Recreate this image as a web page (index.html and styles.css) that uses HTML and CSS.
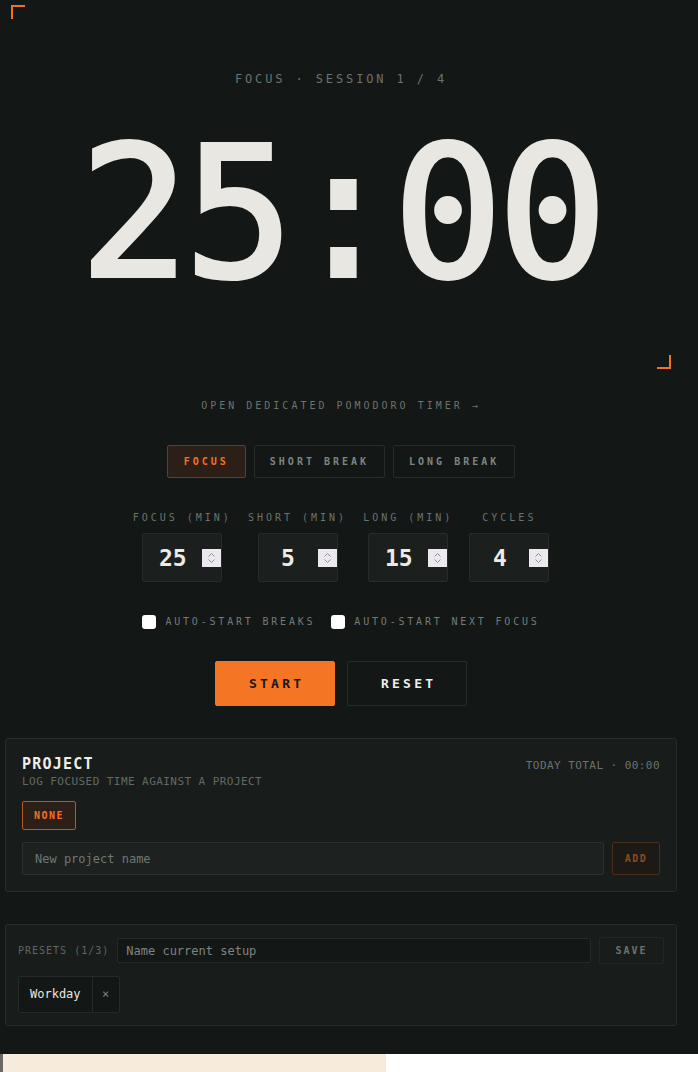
FILE: index.html
```html
<!DOCTYPE html>
<html lang="en">
<head>
<meta charset="utf-8">
<title>Pomodoro</title>
<link rel="stylesheet" href="styles.css">
</head>
<body>
<main class="app">
  <section class="clock">
    <span class="corner corner-tl"></span>
    <span class="corner corner-br"></span>
    <div class="clock-phase">FOCUS · SESSION 1 / 4</div>
    <div class="clock-time">25:00</div>
  </section>

  <a class="dedicated-link" href="#">OPEN DEDICATED POMODORO TIMER →</a>

  <div class="modes">
    <button class="mode mode-active">FOCUS</button>
    <button class="mode">SHORT BREAK</button>
    <button class="mode">LONG BREAK</button>
  </div>

  <div class="fields">
    <label class="field">
      <span class="field-label">FOCUS (MIN)</span>
      <span class="stepper"><span class="stepper-value">25</span><span class="spin"><svg width="19" height="18" viewBox="0 0 19 18"><rect width="19" height="18" fill="#ebe9ef"/><path d="M6.5 7.5 9.5 4.5 12.5 7.5M6.5 10.5 9.5 13.5 12.5 10.5" fill="none" stroke="#8f8c95" stroke-width="1"/></svg></span></span>
    </label>
    <label class="field">
      <span class="field-label">SHORT (MIN)</span>
      <span class="stepper"><span class="stepper-value">5</span><span class="spin"><svg width="19" height="18" viewBox="0 0 19 18"><rect width="19" height="18" fill="#ebe9ef"/><path d="M6.5 7.5 9.5 4.5 12.5 7.5M6.5 10.5 9.5 13.5 12.5 10.5" fill="none" stroke="#8f8c95" stroke-width="1"/></svg></span></span>
    </label>
    <label class="field">
      <span class="field-label">LONG (MIN)</span>
      <span class="stepper"><span class="stepper-value">15</span><span class="spin"><svg width="19" height="18" viewBox="0 0 19 18"><rect width="19" height="18" fill="#ebe9ef"/><path d="M6.5 7.5 9.5 4.5 12.5 7.5M6.5 10.5 9.5 13.5 12.5 10.5" fill="none" stroke="#8f8c95" stroke-width="1"/></svg></span></span>
    </label>
    <label class="field">
      <span class="field-label">CYCLES</span>
      <span class="stepper"><span class="stepper-value">4</span><span class="spin"><svg width="19" height="18" viewBox="0 0 19 18"><rect width="19" height="18" fill="#ebe9ef"/><path d="M6.5 7.5 9.5 4.5 12.5 7.5M6.5 10.5 9.5 13.5 12.5 10.5" fill="none" stroke="#8f8c95" stroke-width="1"/></svg></span></span>
    </label>
  </div>

  <div class="toggles">
    <label class="toggle"><span class="check"></span><span class="toggle-text">AUTO-START BREAKS</span></label>
    <label class="toggle"><span class="check"></span><span class="toggle-text">AUTO-START NEXT FOCUS</span></label>
  </div>

  <div class="actions">
    <button class="btn btn-start">START</button>
    <button class="btn btn-reset">RESET</button>
  </div>

  <section class="card project">
    <div class="project-head">
      <div>
        <h2 class="project-title">PROJECT</h2>
        <p class="project-sub">LOG FOCUSED TIME AGAINST A PROJECT</p>
      </div>
      <span class="project-total">TODAY TOTAL · 00:00</span>
    </div>
    <div class="project-list">
      <button class="chip-btn chip-active">NONE</button>
    </div>
    <div class="project-add">
      <input class="text-input" type="text" placeholder="New project name">
      <button class="add-btn">ADD</button>
    </div>
  </section>

  <section class="card presets">
    <div class="presets-row">
      <span class="presets-label">PRESETS (1/3)</span>
      <input class="preset-input" type="text" placeholder="Name current setup">
      <button class="save-btn">SAVE</button>
    </div>
    <div class="preset-list">
      <div class="preset">
        <span class="preset-name">Workday</span>
        <span class="preset-remove">×</span>
      </div>
    </div>
  </section>
</main>
<div class="below">
  <div class="below-block"></div>
</div>
</body>
</html>
```

FILE: styles.css
```css
* { box-sizing: border-box; }

html, body {
  margin: 0;
  padding: 0;
  background: #ffffff;
}

body {
  font-family: "DejaVu Sans Mono", "Liberation Mono", monospace;
  color: #ece9e2;
}

button, input {
  font-family: inherit;
}

.app {
  background: #131716;
  padding: 5px 21px 28px 5px;
  display: flex;
  flex-direction: column;
  align-items: center;
}

/* ---- clock panel ---- */
.clock {
  position: relative;
  align-self: stretch;
  margin: 0 6px;
  padding: 66px 0 58px;
  text-align: center;
}

.corner {
  position: absolute;
  width: 14px;
  height: 14px;
  border-color: #f27222;
  border-style: solid;
  border-width: 0;
}
.corner-tl { top: 0; left: 0; border-top-width: 2px; border-left-width: 2px; }
.corner-br { bottom: 0; right: 0; border-bottom-width: 2px; border-right-width: 2px; }

.clock-phase {
  font-size: 12px;
  line-height: 16px;
  letter-spacing: 0.24em;
  color: #6b7370;
}

/* regular cut thickened with a stroke for a medium weight */
.clock-time {
  margin-top: 28px;
  font-size: 182px;
  line-height: 196px;
  font-weight: 400;
  letter-spacing: -5px;
  color: #e9e7e2;
  -webkit-text-stroke: 4px #e9e7e2;
}

/* ---- link ---- */
.dedicated-link {
  margin-top: 30px;
  font-size: 10px;
  line-height: 14px;
  letter-spacing: 0.3em;
  color: #6b7370;
  text-decoration: none;
}

/* ---- mode switch ---- */
.modes {
  margin-top: 32px;
  display: flex;
  gap: 8px;
}

.mode {
  padding: 8px 15px;
  font-size: 10px;
  line-height: 15px;
  font-weight: 700;
  letter-spacing: 0.3em;
  color: #7d8581;
  background: transparent;
  border: 1px solid #272c2b;
  border-radius: 2px;
}

.mode-active {
  padding: 8px 16px;
  color: #f27222;
  background: #2b1f17;
  border-color: #6e3a1a;
}

/* ---- numeric fields ---- */
.fields {
  margin-top: 33px;
  display: flex;
  gap: 16px;
}

.field {
  display: flex;
  flex-direction: column;
  align-items: center;
  gap: 8px;
}

.field-label {
  font-size: 10px;
  line-height: 14px;
  letter-spacing: 0.3em;
  color: #6b7370;
  white-space: nowrap;
}

.stepper {
  width: 80px;
  height: 49px;
  display: flex;
  align-items: center;
  background: #1b201f;
  border: 1px solid #272c2b;
  border-radius: 2px;
}

.stepper-value {
  flex: 1;
  text-align: center;
  font-size: 23px;
  font-weight: 700;
  color: #eeebe4;
}

.spin {
  display: flex;
  width: 19px;
  height: 18px;
}

/* ---- toggles ---- */
.toggles {
  margin-top: 33px;
  display: flex;
  gap: 16px;
}

.toggle {
  display: flex;
  align-items: center;
  gap: 9px;
}

.check {
  width: 14px;
  height: 14px;
  background: #ffffff;
  border-radius: 3px;
}

.toggle-text {
  font-size: 10px;
  line-height: 14px;
  letter-spacing: 0.28em;
  color: #747c79;
}

/* ---- start / reset ---- */
.actions {
  margin-top: 32px;
  display: flex;
  gap: 12px;
}

.btn {
  width: 120px;
  height: 45px;
  font-size: 13px;
  font-weight: 700;
  letter-spacing: 0.25em;
  padding: 0 0 0 0.25em;
  border-radius: 2px;
}

.btn-start {
  background: #f47524;
  color: #1a1612;
  border: 1px solid #f47524;
}

.btn-reset {
  background: #131716;
  color: #f1eee8;
  border: 1px solid #272c2b;
}

/* ---- cards ---- */
.card {
  align-self: stretch;
  background: #181c1b;
  border: 1px solid #272c2b;
  border-radius: 3px;
}

.project {
  margin-top: 32px;
  padding: 16px;
}

.project-head {
  display: flex;
  justify-content: space-between;
  align-items: baseline;
}

.project-title {
  margin: 0;
  font-size: 15px;
  line-height: 18px;
  font-weight: 700;
  letter-spacing: 0.08em;
  color: #f1eee8;
}

.project-sub {
  margin: 1px 0 0;
  font-size: 11px;
  line-height: 15px;
  letter-spacing: 0.04em;
  color: #626a67;
}

.project-total {
  font-size: 11px;
  line-height: 15px;
  letter-spacing: 0.04em;
  color: #6b7370;
}

.project-list {
  margin-top: 12px;
  display: flex;
  gap: 8px;
}

.chip-btn {
  padding: 7px 11px;
  font-size: 10px;
  line-height: 13px;
  font-weight: 700;
  letter-spacing: 0.15em;
  border-radius: 2px;
}

.chip-active {
  color: #f27222;
  background: #2b1f17;
  border: 1px solid #b65a20;
}

.project-add {
  margin-top: 12px;
  display: flex;
  gap: 8px;
}

.text-input {
  flex: 1;
  height: 33px;
  padding: 0 12px;
  font-size: 12px;
  color: #ece9e2;
  background: #1d2221;
  border: 1px solid #2a302e;
  border-radius: 2px;
  outline: none;
}

.text-input::placeholder { color: #707774; }

.add-btn {
  width: 48px;
  height: 33px;
  font-size: 10px;
  font-weight: 700;
  letter-spacing: 0.15em;
  color: #8a4a22;
  background: #1c1a17;
  border: 1px solid #4a2e1c;
  border-radius: 2px;
}

.presets {
  margin-top: 32px;
  padding: 12px;
}

.presets-row {
  display: flex;
  align-items: center;
  gap: 8px;
}

.presets-label {
  font-size: 10px;
  line-height: 14px;
  letter-spacing: 0.1em;
  color: #5f6764;
  white-space: nowrap;
}

.preset-input {
  flex: 1;
  height: 25px;
  padding: 0 8px;
  font-size: 12px;
  color: #ece9e2;
  background: #131716;
  border: 1px solid #252a29;
  border-radius: 2px;
  outline: none;
}

.preset-input::placeholder { color: #7e8582; }

.save-btn {
  width: 65px;
  height: 27px;
  font-size: 10px;
  font-weight: 700;
  letter-spacing: 0.2em;
  color: #6b7370;
  background: transparent;
  border: 1px solid #222726;
  border-radius: 2px;
}

.preset-list {
  margin-top: 12px;
  display: flex;
  gap: 8px;
}

.preset {
  display: flex;
  height: 37px;
  background: #131716;
  border: 1px solid #252a29;
  border-radius: 2px;
}

.preset-name {
  padding: 0 11px;
  font-size: 12px;
  line-height: 35px;
  color: #e9e6df;
}

.preset-remove {
  width: 27px;
  text-align: center;
  font-size: 12px;
  line-height: 35px;
  color: #7d8581;
  border-left: 1px solid #252a29;
}

/* ---- next section peeking in ---- */
.below {
  background: #ffffff;
  height: 40px;
}

.below-block {
  width: 386px;
  height: 100%;
  background: #f7ebdc;
  border-left: 3px solid #6d6863;
}
```
